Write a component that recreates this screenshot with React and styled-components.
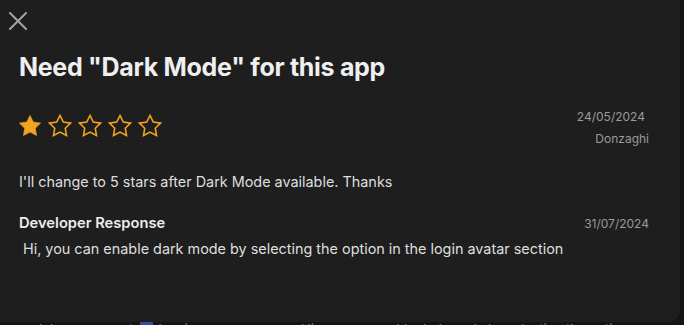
import React from 'react';
import styled, { createGlobalStyle } from 'styled-components';

const GlobalStyle = createGlobalStyle`
  html, body {
    margin: 0;
    padding: 0;
    background: #141414;
  }
  body {
    font-family: Inter, "Noto Sans", sans-serif;
    -webkit-font-smoothing: antialiased;
  }
`;

const Screen = styled.div`
  width: 684px;
  height: 325px;
  overflow: hidden;
  display: flex;
  flex-direction: column;
  background: #141414;
`;

const Sheet = styled.div`
  width: 680px;
  height: 322px;
  flex: none;
  box-sizing: border-box;
  padding: 12px 31px 0 19px;
  background: #1e1e1e;
  border-radius: 0 0 12px 0;
  display: flex;
  flex-direction: column;
`;

const CloseButton = styled.button`
  width: 18px;
  height: 18px;
  margin-left: -10px;
  padding: 0;
  border: 0;
  background: none;
  color: #a3a3a3;
  cursor: pointer;
  display: block;
`;

const Title = styled.h1`
  margin: 22px 0 0 0;
  font-size: 25px;
  line-height: 30px;
  font-weight: 700;
  color: #efefef;
  letter-spacing: -0.3px;
`;

const RatingRow = styled.div`
  margin-top: 27px;
  display: flex;
  justify-content: space-between;
  align-items: flex-start;
`;

const Stars = styled.div`
  display: flex;
  gap: 8px;
  margin-top: 6px;
`;

const Meta = styled.div`
  display: flex;
  flex-direction: column;
  align-items: flex-end;
`;

const MetaText = styled.span`
  font-size: 12px;
  line-height: 15px;
  color: #9a9a9a;
  margin-top: ${(p) => (p.$gap ? '7px' : '0')};
  margin-right: ${(p) => (p.$shift ? '4px' : '0')};
`;

const Body = styled.p`
  margin: 27px 0 0;
  font-size: 14.4px;
  line-height: 18px;
  color: #dedede;
`;

const ResponseHead = styled.div`
  margin-top: 23px;
  display: flex;
  justify-content: space-between;
  align-items: baseline;
`;

const ResponseTitle = styled.h2`
  margin: 0;
  font-size: 14.7px;
  line-height: 18px;
  font-weight: 600;
  color: #ececec;
`;

const Response = styled.p`
  margin: 8px 0 0;
  padding-left: 4px;
  font-size: 14.4px;
  line-height: 18px;
  color: #dedede;
`;

const Behind = styled.div`
  height: 3px;
  display: flex;
  align-items: flex-start;
  overflow: hidden;
  white-space: nowrap;
  font-size: 13px;
  line-height: 13px;
  color: #8a8a8a;
`;

const BehindText = styled.span`
  margin-left: ${(p) => p.$left || 0}px;
  margin-top: 1px;
  color: ${(p) => (p.$link ? '#4756c2' : '#8a8a8a')};
`;

const Chip = styled.span`
  width: 13px;
  height: 3px;
  margin-left: ${(p) => p.$left || 0}px;
  background: #3a49a8;
`;

const STAR = '12,2 15.09,8.26 22,9.27 17,14.14 18.18,21.02 12,17.77 5.82,21.02 7,14.14 2,9.27 8.91,8.26';

const Star = ({ filled }) => (
  <svg width="22" height="22" viewBox="1.6 1.6 20.8 20.8" style={{ overflow: 'visible' }}>
    <polygon
      points={STAR}
      fill={filled ? '#f2a322' : 'none'}
      stroke="#f2a322"
      strokeWidth={filled ? 0.6 : 1.5}
      strokeLinejoin="miter"
    />
  </svg>
);

const App = () => (
  <Screen>
    <GlobalStyle />
    <Sheet>
      <CloseButton aria-label="Close">
        <svg width="18" height="18" viewBox="0 0 18 18">
          <path d="M1 1 L17 17 M17 1 L1 17" stroke="currentColor" strokeWidth="2" strokeLinecap="square" />
        </svg>
      </CloseButton>
      <Title>Need "Dark Mode" for this app</Title>
      <RatingRow>
        <Stars>
          {[1, 2, 3, 4, 5].map((n) => (
            <Star key={n} filled={n <= 1} />
          ))}
        </Stars>
        <Meta>
          <MetaText $shift>24/05/2024</MetaText>
          <MetaText $gap>Donzaghi</MetaText>
        </Meta>
      </RatingRow>
      <Body>I'll change to 5 stars after Dark Mode available. Thanks</Body>
      <ResponseHead>
        <ResponseTitle>Developer Response</ResponseTitle>
        <MetaText>31/07/2024</MetaText>
      </ResponseHead>
      <Response>Hi, you can enable dark mode by selecting the option in the login avatar section</Response>
    </Sheet>
    <Behind>
      <BehindText>ngan dukungan angat</BehindText>
      <Chip $left={6} />
      <BehindText $left={6}>kami</BehindText>
      <BehindText $left={20} $link>more</BehindText>
      <BehindText $left={62}>Hi, you can enable dark mode by selecting the option</BehindText>
      <BehindText $left={14} $link>more</BehindText>
    </Behind>
  </Screen>
);

export default App;
